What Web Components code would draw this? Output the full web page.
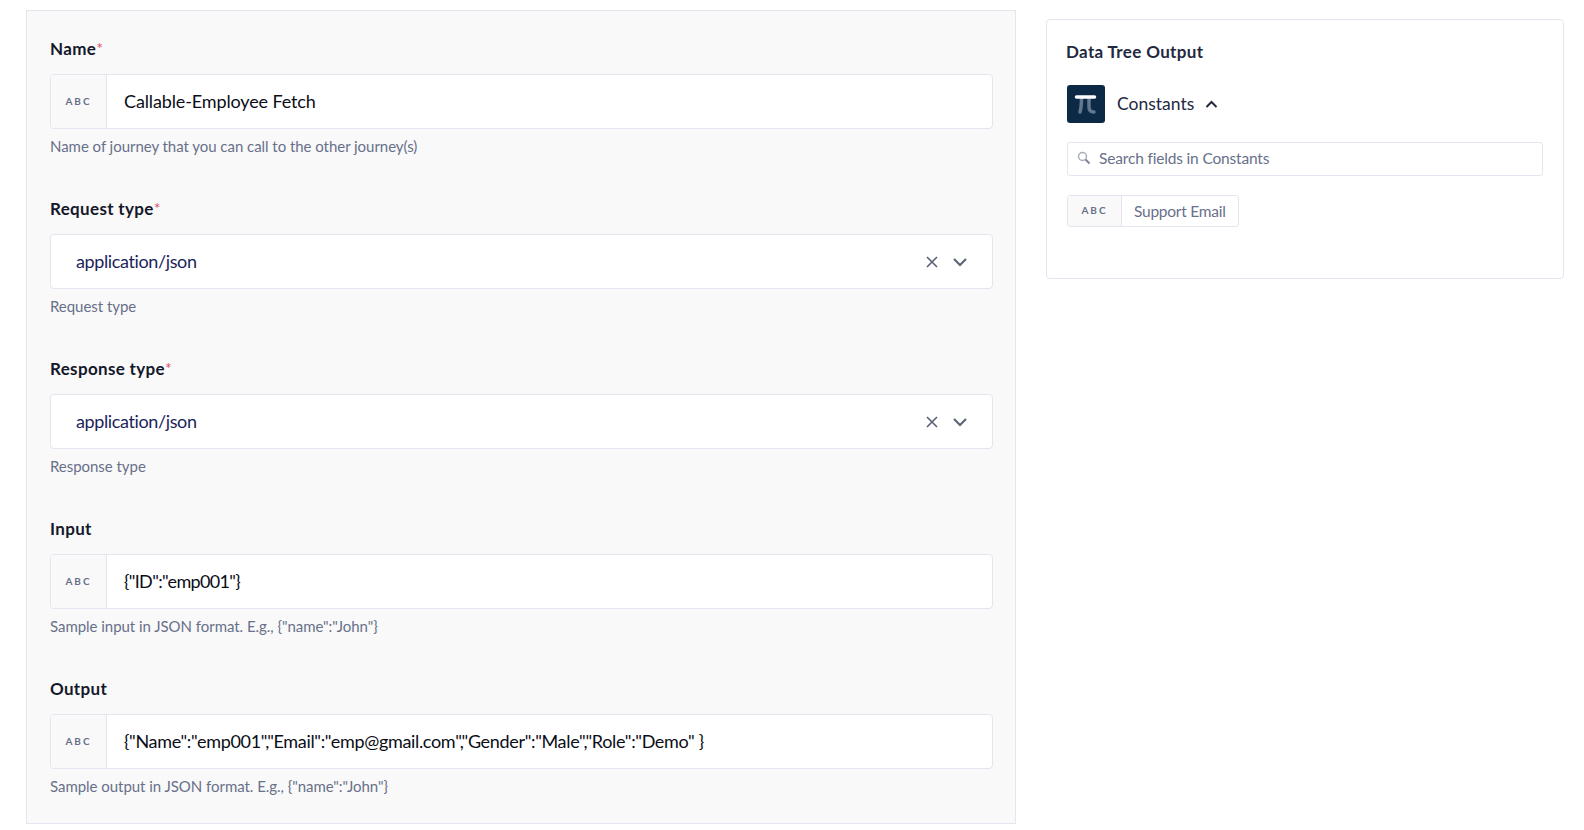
<!DOCTYPE html>
<html>
<head>
<meta charset="utf-8">
<style>
  html, body { margin: 0; height: 830px; overflow: hidden; background: #fff; }
  body { font-family: Lato, "Liberation Sans", sans-serif; }
</style>
</head>
<body>
<journey-page>
  <form-panel>
    <form-field label="Name" required help="Name of journey that you can call to the other journey(s)">
      <abc-input style="--ls:-0.13px" value="Callable-Employee Fetch"></abc-input>
    </form-field>
    <form-field label="Request type" required help="Request type">
      <select-input value="application/json"></select-input>
    </form-field>
    <form-field label="Response type" required help="Response type">
      <select-input value="application/json"></select-input>
    </form-field>
    <form-field label="Input" help='Sample input in JSON format. E.g., {"name":"John"}'>
      <abc-input style="--ls:-0.67px" value='{"ID":"emp001"}'></abc-input>
    </form-field>
    <form-field label="Output" help='Sample output in JSON format. E.g., {"name":"John"}'>
      <abc-input style="--ls:-0.33px" value='{"Name":"emp001","Email":"emp@gmail.com","Gender":"Male","Role":"Demo" }'></abc-input>
    </form-field>
  </form-panel>
  <data-tree></data-tree>
</journey-page>

<script>
class JourneyPage extends HTMLElement {
  constructor() {
    super();
    this.attachShadow({ mode: 'open' }).innerHTML = `
      <style>
        :host { display: flex; align-items: flex-start; gap: 30px; padding: 10px 36px 0 26px; height: 820px; box-sizing: border-box; }
      </style>
      <slot></slot>`;
  }
}

class FormPanel extends HTMLElement {
  constructor() {
    super();
    this.attachShadow({ mode: 'open' }).innerHTML = `
      <style>
        :host { display: flex; flex-direction: column; gap: 24px; box-sizing: border-box; width: 990px; height: 814px; flex: none;
          padding: 26px 22px 0 23px; background: #f9f9f9; border: 1px solid #e3e6ef; }
      </style>
      <slot></slot>`;
  }
}

class FormField extends HTMLElement {
  constructor() {
    super();
    this.attachShadow({ mode: 'open' }).innerHTML = `
      <style>
        :host { display: block; height: 136px; }
        .label { font-size: 17px; line-height: 22px; font-weight: 700; color: #14182a; margin-bottom: 14px; letter-spacing: 0.33px; }
        .star { color: #d9536f; font-weight: 400; font-size: 16px; vertical-align: 1px; }
        .help { font-size: 15px; line-height: 20px; margin-top: 7px; color: #68708a; letter-spacing: -0.04px; }
      </style>
      <div class="label"><span class="txt"></span><span class="star"></span></div>
      <slot></slot>
      <div class="help"></div>`;
  }
  connectedCallback() {
    const s = this.shadowRoot;
    s.querySelector('.txt').textContent = this.getAttribute('label');
    s.querySelector('.star').textContent = this.hasAttribute('required') ? '*' : '';
    s.querySelector('.help').textContent = this.getAttribute('help');
  }
}

class AbcInput extends HTMLElement {
  constructor() {
    super();
    this.attachShadow({ mode: 'open' }).innerHTML = `
      <style>
        :host { display: flex; height: 55px; box-sizing: border-box; background: #fff; border: 1px solid #e3e6ef; border-radius: 4px; overflow: hidden; }
        .abc { width: 56px; flex: none; display: flex; align-items: center; justify-content: center; background: #f9f9f9; padding-bottom: 2px;
          border-right: 1px solid #e3e6ef; font-size: 10px; font-weight: 700; letter-spacing: 2px; color: #68708a; box-sizing: border-box; }
        .val { flex: 1; display: flex; align-items: center; padding: 0 0 1px 17px; font-size: 18px; color: #0b0d17; white-space: nowrap; letter-spacing: var(--ls, 0); }
      </style>
      <div class="abc">ABC</div>
      <div class="val"></div>`;
  }
  connectedCallback() {
    this.shadowRoot.querySelector('.val').textContent = this.getAttribute('value');
  }
}

class SelectInput extends HTMLElement {
  constructor() {
    super();
    this.attachShadow({ mode: 'open' }).innerHTML = `
      <style>
        :host { display: flex; align-items: center; height: 55px; box-sizing: border-box; background: #fff; border: 1px solid #e3e6ef; border-radius: 4px; padding: 0 25px 0 25px; }
        .val { flex: 1; font-size: 18px; color: #1b1f5c; letter-spacing: -0.38px; padding-bottom: 2px; }
        svg { display: block; flex: none; }
        .x { margin-right: 14px; }
      </style>
      <div class="val"></div>
      <svg class="x" width="14" height="14" viewBox="0 0 14 14"><path d="M2 2l10 10M12 2L2 12" stroke="#5e6579" stroke-width="1.7" fill="none"/></svg>
      <svg width="14" height="10" viewBox="0 0 14 10"><path d="M1 2l6 6 6-6" stroke="#5e6579" stroke-width="2.2" fill="none"/></svg>`;
  }
  connectedCallback() {
    this.shadowRoot.querySelector('.val').textContent = this.getAttribute('value');
  }
}

class DataTree extends HTMLElement {
  constructor() {
    super();
    this.attachShadow({ mode: 'open' }).innerHTML = `
      <style>
        :host { display: block; box-sizing: border-box; width: 518px; height: 260px; flex: none; margin-top: 9px; padding: 21px 20px 0 20px;
          background: #fff; border: 1px solid #e3e6ef; border-radius: 4px; }
        h2 { margin: 0 0 0 -1px; font-size: 17px; line-height: 22px; font-weight: 700; color: #23283f; letter-spacing: 0.35px; }
        .head { display: flex; align-items: center; margin-top: 22px; }
        .pi { width: 38px; height: 38px; border-radius: 3px; background: #0c2945; flex: none; }
        .pi svg { display: block; }
        .name { margin-left: 12px; padding-bottom: 1px; font-size: 17.5px; color: #23283f; }
        .up { margin-left: 11px; }
        .search { display: flex; align-items: center; height: 34px; box-sizing: border-box; margin-top: 19px; border: 1px solid #e3e6ef; border-radius: 3px; padding: 0 0 2px 9px; font-size: 15.5px; color: #68708a; letter-spacing: -0.17px; }
        .search svg { margin-right: 8px; }
        .chip { display: inline-flex; height: 32px; box-sizing: border-box; margin-top: 19px; border: 1px solid #e3e6ef; border-radius: 3px; overflow: hidden; }
        .abc { width: 53px; padding-bottom: 2px; display: flex; align-items: center; justify-content: center; background: #f9f9f9; border-right: 1px solid #e3e6ef; font-size: 10px; font-weight: 700; letter-spacing: 2px; color: #68708a; }
        .field { display: flex; align-items: center; padding: 0 12px 1px; font-size: 15.5px; color: #68708a; letter-spacing: -0.25px; }
      </style>
      <h2>Data Tree Output</h2>
      <div class="head">
        <div class="pi"><svg width="38" height="38" viewBox="0 0 38 38"><path d="M14.5 13c0 5-.3 10-1.5 14M22 13v9c0 3.500 1.500 5 5 5" stroke="#63778d" stroke-width="3.500" fill="none" stroke-linecap="round"/><path d="M9.500 12h18" stroke="#fff" stroke-width="3.500" fill="none" stroke-linecap="round"/></svg></div>
        <span class="name">Constants</span>
        <svg class="up" width="13" height="9" viewBox="0 0 13 9"><path d="M1.500 7l5-5 5 5" stroke="#23283f" stroke-width="2" fill="none"/></svg>
      </div>
      <div class="search">
        <svg width="14" height="14" viewBox="0 0 14 14"><circle cx="5.500" cy="5.500" r="4" stroke="#a9adb8" stroke-width="1.500" fill="none"/><path d="M8.500 8.500l4 4" stroke="#7e8494" stroke-width="2"/></svg>
        Search fields in Constants
      </div>
      <div class="chip"><div class="abc">ABC</div><div class="field">Support Email</div></div>`;
  }
}

customElements.define('journey-page', JourneyPage);
customElements.define('form-panel', FormPanel);
customElements.define('form-field', FormField);
customElements.define('abc-input', AbcInput);
customElements.define('select-input', SelectInput);
customElements.define('data-tree', DataTree);
</script>
</body>
</html>
